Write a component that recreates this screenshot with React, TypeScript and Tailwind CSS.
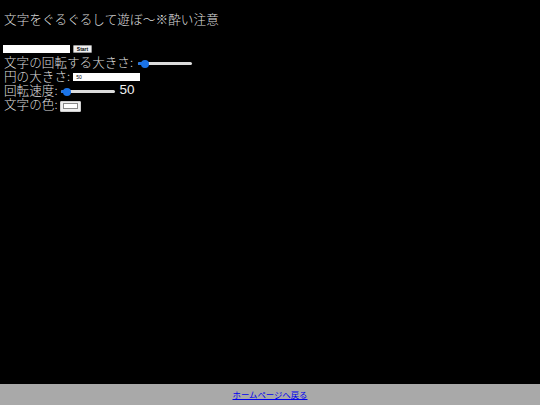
import React from "react";

const jp = { fontFamily: '"Noto Sans CJK JP", "Noto Sans", sans-serif' };

function Slider({ width, thumb }: { width: number; thumb: number }) {
  return (
    <div className="relative h-[8px]" style={{ width }}>
      <div className="absolute left-0 right-0 top-[3px] h-[3px] rounded-full bg-[#dcdcdc]" />
      <div className="absolute left-0 top-[3px] h-[3px] rounded-full bg-[#1a73e8]" style={{ width: thumb }} />
      <div
        className="absolute top-[0.5px] h-[8px] w-[8px] rounded-full bg-[#1a73e8]"
        style={{ left: thumb - 3 }}
      />
    </div>
  );
}

export default function App() {
  return (
    <div className="flex h-[405px] w-[540px] flex-col bg-black text-[#dedede] font-light" style={jp}>
      <div className="flex-1 px-[4px]">
        <div className="mt-[11px] block h-[15px] text-[12.6px] leading-[15px] tracking-[0.1px]">
          文字をぐるぐるして遊ぼ〜※酔い注意
        </div>
        <div className="mt-[19px] flex h-[8px] items-center">
          <div className="ml-[-1px] h-[8px] w-[67px] bg-white" />
          <div
            className="ml-[3px] flex h-[8px] w-[19px] items-center justify-center rounded-[1px] border border-[#999] bg-[#efefef] text-[5px] font-bold leading-none text-black"
            style={{ fontFamily: '"Liberation Sans", sans-serif' }}
          >
            Start
          </div>
        </div>
        <div className="mt-[2px] flex h-[14px] items-center">
          <span className="block h-[14px] text-[12.6px] leading-[14px]">文字の回転する大きさ:</span>
          <div className="ml-[5px] mt-[2px]">
            <Slider width={54} thumb={6} />
          </div>
        </div>
        <div className="flex h-[14px] items-center">
          <span className="block h-[14px] text-[12.6px] leading-[14px]">円の大きさ:</span>
          <div
            className="ml-[3px] mt-[2px] flex h-[8px] w-[67px] items-center bg-white pl-[3px] text-[5px] font-normal leading-none text-black"
            style={{ fontFamily: '"Liberation Sans", sans-serif' }}
          >
            50
          </div>
        </div>
        <div className="flex h-[14px] items-center">
          <span className="block h-[14px] text-[12.6px] leading-[14px]">回転速度:</span>
          <div className="ml-[3px] mt-[2px]">
            <Slider width={54} thumb={5} />
          </div>
          <span
            className="ml-[5px] block h-[14px] text-[13.5px] font-normal leading-[14px] text-[#f0f0f0]"
            style={{ fontFamily: '"Liberation Sans", sans-serif' }}
          >
            50
          </span>
        </div>
        <div className="flex h-[14px] items-center">
          <span className="block h-[14px] text-[12.6px] leading-[14px]">文字の色:</span>
          <div className="ml-[2px] mt-[4px] flex h-[11px] w-[21px] items-center justify-center rounded-[1px] border border-[#cfcfcf] bg-[#efefef]">
            <div className="h-[6px] w-[15px] border border-[#888] bg-white" />
          </div>
        </div>
      </div>
      <div className="flex h-[21px] items-center justify-center bg-[#a9a9a9]">
        <a href="#" className="text-[8.4px] font-normal leading-none text-[#0000ee] underline">
          ホームページへ戻る
        </a>
      </div>
    </div>
  );
}
